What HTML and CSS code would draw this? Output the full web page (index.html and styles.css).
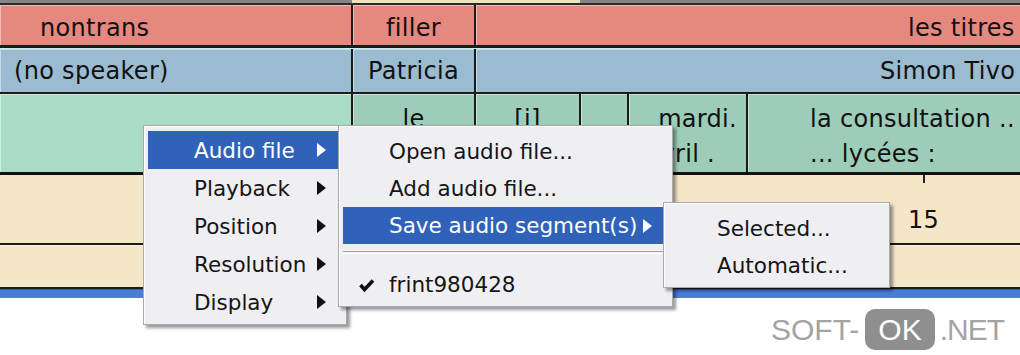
FILE: index.html
```html
<!DOCTYPE html>
<html lang="en">
  <head>
    <meta charset="UTF-8" />
    <title>Transcriber - segments</title>
    <link rel="stylesheet" href="styles.css">
  </head>
  <body>
    <div class="screen">
      <div class="strip">
        <span class="strip-a"></span>
        <span class="strip-b"></span>
        <span class="strip-c"></span>
      </div>

      <div class="row row-section">
        <div class="cell w1 nontrans">nontrans</div>
        <div class="cell w2 center">filler</div>
        <div class="cell grow titres">les titres</div>
      </div>

      <div class="row row-speaker">
        <div class="cell w1 nospeaker">(no speaker)</div>
        <div class="cell w2 center">Patricia</div>
        <div class="cell grow simon">Simon Tivo</div>
      </div>

      <div class="row row-words">
        <div class="cell w1 blank"></div>
        <div class="cell w2 lines center"><span>le</span><span>&nbsp;</span></div>
        <div class="cell w3 lines center"><span>[i]</span><span>&nbsp;</span></div>
        <div class="cell w4"></div>
        <div class="cell w5 lines date"><span class="l1">mardi.</span><span class="l2">avril .</span></div>
        <div class="cell grow lines consult"><span>la consultation ..</span><span>... lycées :</span></div>
      </div>

      <div class="row row-time">
        <span class="tick"></span>
        <span class="time-label">15</span>
      </div>
      <div class="row row-time2"></div>
      <div class="bar"></div>

      <!-- context menus -->
      <div class="menu menu-main">
        <div class="item active">Audio file<span class="arrow"></span></div>
        <div class="item">Playback<span class="arrow"></span></div>
        <div class="item">Position<span class="arrow"></span></div>
        <div class="item">Resolution<span class="arrow"></span></div>
        <div class="item">Display<span class="arrow"></span></div>
      </div>

      <div class="menu menu-audio">
        <div class="item">Open audio file...</div>
        <div class="item">Add audio file...</div>
        <div class="item active">Save audio segment(s)<span class="arrow"></span></div>
        <div class="separator"></div>
        <div class="item checked">
          <svg class="check" width="17" height="16" viewBox="0 0 17 16">
            <polyline points="2.5,8 6.5,12.5 15,3.5" fill="none" stroke="#111" stroke-width="3.6"/>
          </svg>
          <span>frint980428</span>
        </div>
      </div>

      <div class="menu menu-save">
        <div class="item">Selected...</div>
        <div class="item">Automatic...</div>
      </div>

      <div class="watermark">
        <span>SOFT-</span><span class="ok">OK</span><span class="net">.NET</span>
      </div>
    </div>
  </body>
</html>
```

FILE: styles.css
```css
body {
  margin: 0;
  background-color: white;
  font-family: "DejaVu Sans", Verdana, sans-serif;
}
.screen {
  position: relative;
  width: 1020px;
  height: 355px;
  overflow: hidden;
}

/* top edge of the window */
.strip {
  display: flex;
  height: 5px;
  box-sizing: border-box;
  border-bottom: 2px solid #2a2a2a;
}
.strip-a {
  width: 352px;
  background-color: #858585;
}
.strip-b {
  width: 228px;
  background-color: #efe2bf;
}
.strip-c {
  flex: 1;
  background-color: #858585;
}

/* track rows */
.row {
  display: flex;
  box-sizing: border-box;
  font-size: 24px;
  letter-spacing: 0.3px;
  color: #111;
}
.cell {
  display: flex;
  align-items: center;
  box-sizing: border-box;
  border-right: 2px solid #1a1a1a;
  white-space: nowrap;
  overflow: hidden;
  box-shadow: inset 1px 1px 0 rgba(255, 255, 255, 0.45);
}
.w1 { width: 353px; }
.w2 { width: 123px; }
.w3 { width: 105px; }
.w4 { width: 48px; }
.w5 { width: 119px; }
.grow {
  flex: 1;
  border-right: none;
}
.center {
  justify-content: center;
}

.row-section {
  height: 43px;
  border-bottom: 3px solid #1c1c1c;
  background-color: #e5887f;
}
.row-section .cell {
  padding-top: 5px;
}
.nontrans {
  padding-left: 40px;
}
.titres {
  padding-left: 432px;
}

.row-speaker {
  height: 46px;
  border-top: 1px solid #c9eef2;
  border-bottom: 2px solid #1c1c1c;
  background-color: #9bbcd0;
}
.nospeaker {
  padding-left: 14px;
}
.simon {
  padding-left: 404px;
}

.row-words {
  height: 81px;
  border-bottom: 3px solid #111;
  background-color: #9dcdb9;
}
.row-words .blank {
  background-color: #a8dcc7;
}
.lines {
  flex-direction: column;
  align-items: center;
  justify-content: center;
  padding-top: 7px;
  line-height: 35px;
}
.date {
  align-items: flex-end;
}
.date .l1 {
  padding-right: 9px;
}
.date .l2 {
  padding-right: 31px;
}
.consult {
  align-items: flex-start;
  padding-left: 62px;
}

.row-time {
  position: relative;
  height: 70px;
  border-bottom: 2px solid #1c1c1c;
  background-color: #f5e6c7;
}
.tick {
  position: absolute;
  left: 923px;
  top: 0;
  width: 2px;
  height: 8px;
  background-color: #222;
}
.time-label {
  padding: 32px 0 0 908px;
  line-height: 26px;
}
.row-time2 {
  height: 44px;
  border-top: 1px solid #fbf3e2;
  border-bottom: 2px solid #1c1c1c;
  background-color: #f5e6c7;
}
.bar {
  height: 8px;
  background-color: #4a7ed6;
  border-top: 1px solid #2f5fb2;
}

/* context menus */
.menu {
  position: absolute;
  box-sizing: border-box;
  background-color: #efeef2;
  border: 1px solid #a9a8ad;
  box-shadow: inset 1px 1px 0 white, 3px 3px 3px rgba(0, 0, 0, 0.4);
  font-size: 21.5px;
  color: #151515;
}
.menu-main {
  left: 143px;
  top: 125px;
  width: 204px;
  height: 200px;
  padding: 5px 4px;
}
.menu-audio {
  left: 338px;
  top: 125px;
  width: 335px;
  height: 182px;
  padding: 7px 4px;
}
.menu-save {
  left: 663px;
  top: 202px;
  width: 227px;
  height: 86px;
  padding: 7px 4px;
}
.item {
  display: flex;
  align-items: center;
  height: 37px;
  padding: 0 16px 0 46px;
  white-space: nowrap;
}
.menu-main .item {
  height: 38px;
}
.menu-save .item {
  padding-left: 49px;
}
.item.active {
  background-color: #3162b9;
  color: white;
}
.arrow {
  margin-left: auto;
  width: 0;
  height: 0;
  border-top: 7px solid transparent;
  border-bottom: 7px solid transparent;
  border-left: 9px solid #111;
}
.item.active .arrow {
  border-left-color: white;
}
.separator {
  height: 22px;
  box-sizing: border-box;
  padding-top: 7px;
}
.separator::before {
  content: "";
  display: block;
  height: 1px;
  border-top: 1px solid #a3a2a6;
  border-bottom: 1px solid white;
}
.item.checked {
  padding-left: 15px;
}
.check {
  margin-right: 14px;
}

/* watermark */
.watermark {
  position: absolute;
  left: 771px;
  top: 309px;
  display: flex;
  align-items: center;
  font-family: "Liberation Sans", Arial, sans-serif;
  font-size: 30px;
  color: #a3a3a3;
}
.watermark .ok {
  margin: 0 5px 0 6px;
  padding: 0 13px;
  height: 41px;
  line-height: 41px;
  border-radius: 10px;
  background-color: #8f8f8f;
  color: white;
}
.watermark .net {
  letter-spacing: -1px;
}
```
